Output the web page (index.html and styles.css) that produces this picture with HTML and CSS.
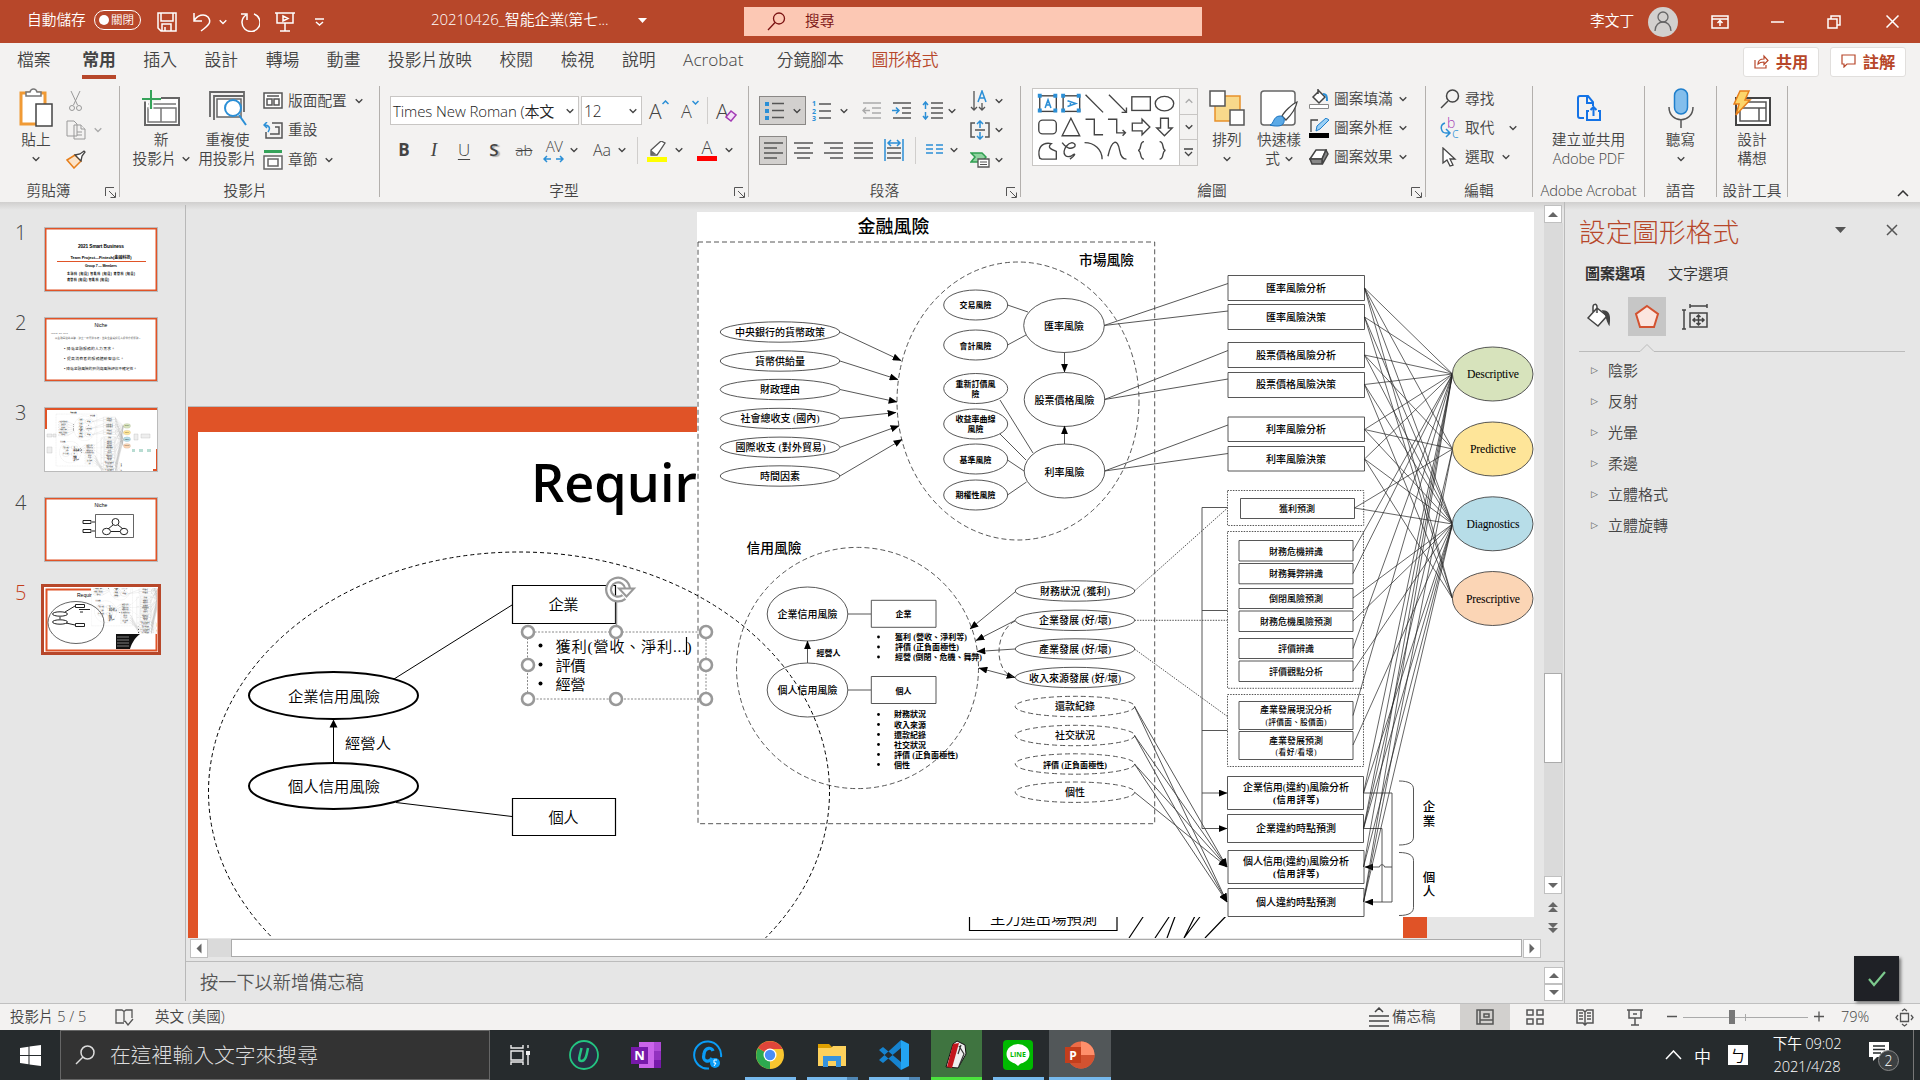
FILE: index.html
```html
<!DOCTYPE html>
<html lang="zh-Hant">
<head>
<meta charset="utf-8">
<title>20210426_智能企業 - PowerPoint</title>
<link rel="stylesheet" href="styles.css">
</head>
<body>
<svg class="defs" width="0" height="0">
  <symbol id="chev" viewBox="0 0 8 6"><path d="M.7 1.2 4 4.5 7.3 1.2" fill="none" stroke="currentColor" stroke-width="1.3"/></symbol>
  <symbol id="launch" viewBox="0 0 11 11"><path d="M.5 9V.5H9M4 4l6 6M10.5 5.5v5h-5" fill="none" stroke="#555"/></symbol>
  <marker id="arw" viewBox="0 0 10 8" refX="9.5" refY="4" markerWidth="9" markerHeight="7" orient="auto-start-reverse" markerUnits="userSpaceOnUse"><path d="M0 0 10 4 0 8z"/></marker>
</svg>
<div class="app">
<header class="titlebar">
  <span class="autosave">自動儲存</span>
  <span class="toggle"><i></i>關閉</span>
  <svg class="i-save" width="20" height="20" viewBox="0 0 20 20"><path d="M1 1h18v18H4l-3-3zM4 1v8h12V1M5 19v-7h9v7M8 15v4"/></svg>
  <svg class="i-undo" width="20" height="20" viewBox="0 0 20 20"><path d="M2 1v8h8M2 9C5 3 12 1 16 5c4 5 1 8-7 14"/></svg>
  <svg class="i-c" width="8" height="6"><use href="#chev"/></svg>
  <svg class="i-redo" width="20" height="20" viewBox="0 0 20 20"><path d="M1 2h6v6M6 3a9 9 0 1 0 8-1"/></svg>
  <svg class="i-show" width="20" height="20" viewBox="0 0 20 20"><path d="M0 1h20M2 1v10h16V1M10 11v8M5 19h10M8 4l5 2.5L8 9z"/></svg>
  <svg class="i-more" width="9" height="8" viewBox="0 0 9 8"><path d="M0 1h9M1 4l3.500 3L8 4"/></svg>
  <span class="doc">20210426_智能企業(第七...</span>
  <svg class="i-tri" width="9" height="5"><path d="M0 0h9L4.500 5z" fill="#fff" stroke="none"/></svg>
  <div class="search"><svg width="19" height="19" viewBox="0 0 19 19"><circle cx="12" cy="6.500" r="5.500"/><path d="M8 10.500 1 18"/></svg><span>搜尋</span></div>
  <span class="user">李文丁</span>
  <span class="avatar"><svg width="20" height="22" viewBox="0 0 20 22"><circle cx="10" cy="6" r="5"/><path d="M2 20c0-12 16-12 16 0"/></svg></span>
  <svg class="w1" width="18" height="14" viewBox="0 0 18 14"><path d="M1 1h16v12H1zM1 4h16M9 11V6M6.500 8 9 5.500 11.500 8"/></svg>
  <svg class="w2" width="13" height="2"><path d="M0 1h13"/></svg>
  <svg class="w3" width="14" height="14" viewBox="0 0 14 14"><path d="M1 4h9v9H1zM4 4V1h9v9h-3"/></svg>
  <svg class="w4" width="13" height="13" viewBox="0 0 13 13"><path d="m.5.5 12 12m0-12-12 12"/></svg>
</header>
<nav class="tabs">
  <span class="file">檔案</span><span class="on">常用</span><span>插入</span><span>設計</span><span>轉場</span><span>動畫</span><span>投影片放映</span><span>校閱</span><span>檢視</span><span>說明</span><span class="acro">Acrobat</span><span>分鏡腳本</span><span class="ctx">圖形格式</span>
  <div class="share">
    <button><svg width="15" height="15" viewBox="0 0 15 15"><path d="M1 6v8h11v-3M4 10c0-4 3-5 6-5V2l4 4.500-4 4V8C7 8 5.500 8.500 4 10z"/></svg>共用</button>
    <button><svg width="15" height="14" viewBox="0 0 15 14"><path d="M1 1h13v9H6l-3 3v-3H1z"/></svg>註解</button>
  </div>
</nav>
<section class="ribbon">
  <div class="group g1"><div class="body">
    <div class="big w-paste"><div class="ico"><svg width="36" height="40" viewBox="0 0 36 40"><path d="M3 5h24v31H3z" fill="#fff" stroke="#f09a35" stroke-width="3"/><path d="M8 8V4h4c1-4 6-4 7 0h4v4z" fill="#fff" stroke="#777" stroke-width="1.500"/><path d="M18 16h16v22H18z" fill="#fff" stroke="#444" stroke-width="1.500"/></svg></div><b>貼上</b><b><svg class="cv"><use href="#chev"/></svg></b></div>
    <div class="rows r1">
      <div><svg width="20" height="20" viewBox="0 0 20 20" fill="none" stroke="#999"><path d="m5 0 6.500 14M14 0 7.500 14"/><circle cx="6" cy="17" r="2.500"/><circle cx="13" cy="17" r="2.500"/></svg></div>
      <div><svg width="20" height="20" viewBox="0 0 20 20" fill="#f3f2f1" stroke="#999"><path d="M1 1h7l3 3v12H1zM8 5h7l4 4v10H8z"/><path d="M15 5v4h4M11 12h5m-5 3h5"/></svg><svg class="cv dim"><use href="#chev"/></svg></div>
      <div><svg width="20" height="19" viewBox="0 0 20 19"><path d="M1 10 9 5l6 6-7 7z" fill="#fbe3c8" stroke="#e77f1b" stroke-width="1.500"/><path d="m9 5 5-1 4-3 1 1-3 4-1 5z" fill="#fff" stroke="#444" stroke-width="1.300"/></svg></div>
    </div></div>
    <div class="label">剪貼簿<svg class="ln"><use href="#launch"/></svg></div></div>

  <div class="group g2"><div class="body">
    <div class="big w-new"><div class="ico"><svg width="38" height="36" viewBox="0 0 38 36"><path d="M3 8h34v27H3z" fill="#fff" stroke="#666" stroke-width="2"/><path d="M6 14h28M19 18v14M6 18h28v14H6z" fill="none" stroke="#777" stroke-width="1.500"/><path d="M9 0v19M0 9h19" stroke="#f3f2f1" stroke-width="5"/><path d="M9 0v19M0 9h19" stroke="#35a35a" stroke-width="2"/></svg></div><b>新</b><b>投影片 <svg class="cv"><use href="#chev"/></svg></b></div>
    <div class="big w-reuse"><div class="ico"><svg width="38" height="36" viewBox="0 0 38 36"><path d="M1 27V2h34v20M5 30V6h30" fill="none" stroke="#666" stroke-width="1.800"/><path d="M8 9h24v18H8z" fill="#fff" stroke="#666" stroke-width="1.500"/><circle cx="24" cy="18" r="8" fill="#fff" stroke="#2b8fd6" stroke-width="2"/><path d="m30 25 7 10" stroke="#2b8fd6" stroke-width="2"/></svg></div><b>重複使</b><b>用投影片</b></div>
    <div class="rows r2">
      <div><svg width="20" height="17" viewBox="0 0 20 17" fill="#fff" stroke="#555" stroke-width="1.500"><path d="M1 1h18v15H1zM4 4h12M4 7h5v6H4zM11 7h5v6h-5z"/></svg><span>版面配置</span><svg class="cv"><use href="#chev"/></svg></div>
      <div><svg width="20" height="17" viewBox="0 0 20 17" fill="none" stroke="#555" stroke-width="1.500"><path d="M9 1h10v15H3v-6M12 5h4v7H7"/><path d="M5 10C8 6 6 3 1 3m3-3L1 3l3 3" stroke="#2b8fd6"/></svg><span>重設</span></div>
      <div><svg width="20" height="20" viewBox="0 0 20 20" fill="#fff" stroke="#666" stroke-width="2"><path d="M1 1.500h18" stroke="#35a35a" stroke-width="3"/><path d="M1 6h18v13H1zM5 9h10v7H5z" stroke-width="1.500"/></svg><span>章節</span><svg class="cv"><use href="#chev"/></svg></div>
    </div></div>
    <div class="label">投影片</div></div>

  <div class="group g3"><div class="body colb">
    <div class="frow">
      <div class="sel s1"><span>Times New Roman (本文</span><svg class="cv"><use href="#chev"/></svg></div>
      <div class="sel s2"><span>12</span><svg class="cv"><use href="#chev"/></svg></div>
      <div class="fa">A<svg width="7" height="5"><path d="M.5 4 3.500 1l3 3" fill="none" stroke="#2b8fd6" stroke-width="1.500"/></svg></div>
      <div class="fa sm">A<svg width="7" height="5"><path d="M.5 1l3 3 3-3" fill="none" stroke="#2b8fd6" stroke-width="1.500"/></svg></div>
      <i class="vs"></i>
      <div class="fa er">A<svg width="12" height="13" viewBox="0 0 12 13"><path d="m1 8 5-6 5 4-5 6z" fill="#f3e0f7" stroke="#a33bb5" stroke-width="1.500"/></svg></div>
    </div>
    <div class="frow f2">
      <span class="c30"><strong>B</strong></span><span class="c30"><em>I</em></span><span class="c30 und">U</span><span class="c30"><strong class="shd">S</strong></span><span class="c30 strike">ab</span>
      <span class="c30 av">AV<svg width="21" height="8" viewBox="0 0 21 8"><path d="M1 4h7M4 1 1 4l3 3M20 4h-7m4-3 3 3-3 3" fill="none" stroke="#2b8fd6" stroke-width="1.500"/></svg></span><svg class="cv"><use href="#chev"/></svg>
      <span class="c30 aa">Aa</span><svg class="cv"><use href="#chev"/></svg><i class="vs"></i>
      <svg class="hl" width="20" height="21" viewBox="0 0 20 21"><path d="M0 16h20v5H0z" fill="#ff0"/><path d="M4 14V9L14 0l4 2-8 12z" fill="#fff" stroke="#555" stroke-width="1.300"/><path d="M4 14V9l5 4z" fill="#666"/></svg><svg class="cv"><use href="#chev"/></svg>
      <span class="fc">A</span><svg class="cv"><use href="#chev"/></svg>
    </div></div>
    <div class="label">字型<svg class="ln"><use href="#launch"/></svg></div></div>

  <div class="group g4"><div class="body">
    <div class="para">
    <div class="frow">
      <div class="press p1"><svg width="20" height="19" viewBox="0 0 20 19"><path d="M7 2.500h12M7 9.500h12M7 16.500h12" stroke="#555" stroke-width="1.500"/><path d="M0 1h4v4H0zM0 8h4v4H0zM0 15h4v4H0z" fill="#2b8fd6"/></svg><svg class="cv"><use href="#chev"/></svg></div>
      <svg class="num" width="20" height="22" viewBox="0 0 20 22"><path d="M7 4h12M7 11h12M7 18h12" stroke="#555" stroke-width="1.500"/><g fill="#2b8fd6" font-size="7" font-weight="700"><text x="0" y="6">1</text><text x="0" y="14">2</text><text x="0" y="21">3</text></g></svg><svg class="cv"><use href="#chev"/></svg>
      <svg class="ded" width="19" height="17" viewBox="0 0 19 17" stroke="#aaa" fill="none" stroke-width="1.500"><path d="M1 1h18M10 6h9M10 11h9M1 16h18M8 8.500H1m3-3-3 3 3 3"/></svg>
      <svg class="ind" width="19" height="17" viewBox="0 0 19 17" stroke="#555" fill="none" stroke-width="1.500"><path d="M1 1h18M10 6h9M10 11h9M1 16h18"/><path d="M0 8.500h7m-3-3 3 3-3 3" stroke="#2b8fd6"/></svg>
      <svg class="lsp" width="21" height="19" viewBox="0 0 21 19" stroke="#555" fill="none" stroke-width="1.500"><path d="M9 2h12M9 7h12M9 12h12M9 17h12"/><path d="M3.500 1v7M1 4l2.500-3L6 4M3.500 11v7M1 15l2.500 3L6 15" stroke="#2b8fd6"/></svg><svg class="cv"><use href="#chev"/></svg>
    </div>
    <div class="frow f2">
      <div class="press p2"><svg width="19" height="18" class="al"><path d="M0 2h19M0 7h13M0 12h19M0 17h13"/></svg></div>
      <svg width="19" height="18" class="al a2"><path d="M0 2h19M3 7h13M0 12h19M3 17h13"/></svg>
      <svg width="19" height="18" class="al a3"><path d="M0 2h19M6 7h13M0 12h19M6 17h13"/></svg>
      <svg width="19" height="18" class="al a3"><path d="M0 2h19M0 7h19M0 12h19M0 17h19"/></svg>
      <svg width="20" height="22" class="al a3"><path d="M3 9h14M3 14h14M3 19h14"/><path d="M1 0v22M19 0v22M4 4h12M7 1 4 4l3 3M13 1l3 3-3 3" stroke="#2b8fd6"/></svg>
      <i class="vs"></i>
      <svg width="17" height="12" class="cols"><path d="M0 1h7M0 5h7M0 9h7M10 1h7M10 5h7M10 9h7" stroke="#2b8fd6" stroke-width="1.700"/></svg><svg class="cv"><use href="#chev"/></svg>
    </div></div>
    <div class="rows r4">
      <div><svg width="20" height="22" viewBox="0 0 20 22" fill="none" stroke="#555" stroke-width="1.300"><path d="M4 1v19M1 17l3 3 3-3M12 13v7M9 17l3 3 3-3"/><path d="M8 12 12 1l4 11M9.500 8h5" stroke="#2b8fd6" stroke-width="1.500"/></svg><svg class="cv"><use href="#chev"/></svg></div>
      <div><svg width="20" height="20" viewBox="0 0 20 20" fill="none" stroke="#555" stroke-width="1.500"><path d="M5 3H1v14h4M15 3h4v14h-4M5 10h10"/><path d="M10 1v7M7 4l3-3 3 3M10 12v7M7 16l3 3 3-3" stroke="#2b8fd6"/></svg><svg class="cv"><use href="#chev"/></svg></div>
      <div><svg width="20" height="16" viewBox="0 0 20 16"><path d="M1 1h11l4 4-4 5H1l4-5z" fill="#8fd39f" stroke="#2f9e50" stroke-width="1.500"/><path d="M8 7h11v8H8z" fill="#fff" stroke="#555" stroke-width="1.300"/><path d="M10 10h7M10 12.500h7" stroke="#555"/></svg><svg class="cv"><use href="#chev"/></svg></div>
    </div></div>
    <div class="label">段落<svg class="ln"><use href="#launch"/></svg></div></div>

  <div class="group g5"><div class="body">
    <div class="gallery">
      <svg width="146" height="78" viewBox="1032 88 146 78" fill="none" stroke="#444" stroke-width="1.400">
        <rect x="1037" y="95" width="17" height="16"/><rect x="1061" y="95" width="17" height="16"/>
        <g fill="#2b8fd6" stroke="none"><path d="M1035 93h4v4h-4zM1051 93h4v4h-4zM1035 108h4v4h-4zM1051 108h4v4h-4zM1059 93h4v4h-4zM1075 93h4v4h-4zM1059 108h4v4h-4zM1075 108h4v4h-4z"/></g>
        <path d="m1042.500 107.500 3-8.500 3 8.500m-5-3h4M1065.500 100l8.500 3-8.500 3m3-5v4" stroke="#2b8fd6" stroke-width="1.600"/>
        <path d="m1084 94 18 18M1108 94l18 18M1126 107v5h-5"/><rect x="1131.500" y="96" width="19" height="14"/><ellipse cx="1165" cy="103" rx="9.500" ry="7.500"/>
        <rect x="1036" y="120" width="18" height="14" rx="4"/><path d="m1069 118 9 18h-18zM1084 119h9v16h9M1107 119h9v14h9m-3-3 3 3-3 3M1132 123h10v-4l8 8-8 8v-4h-10zM1161 118h8v10h4l-8 8-8-8h4z"/>
        <path d="M1037 159c-3-10 2-17 12-15-5 4 0 6 5 8v8h-15zM1060 143c8 12 19 2 10 0-9 2-12 17-1 14 7-5 3 0-1 3M1083 143c10 0 18 7 18 17M1107 157c4-18 10-18 12-6 1 6 3 9 7 9M1144 142c-5 0-2 8-6 9 4 1 1 9 6 9M1160 142c5 0 2 8 6 9-4 1-1 9-6 9"/>
      </svg>
      <div class="gbtn"><i><svg class="cv dim up"><use href="#chev"/></svg></i><i><svg class="cv"><use href="#chev"/></svg></i><i class="l3"><svg width="9" height="9" viewBox="0 0 9 9"><path d="M0 1h9M1 4l3.500 3.500L8 4" fill="none" stroke="#444" stroke-width="1.300"/></svg></i></div>
    </div>
    <div class="big w-arr"><div class="ico"><svg width="36" height="36" viewBox="0 0 36 36" stroke-width="1.500"><path d="M6 6h25v25H6z" fill="#f8d98b" stroke="#e8912b"/><path d="M1 1h15v15H1zM21 20h14v15H21z" fill="#fff" stroke="#555"/></svg></div><b>排列</b><b><svg class="cv"><use href="#chev"/></svg></b></div>
    <div class="big w-qs"><div class="ico"><svg width="38" height="37" viewBox="0 0 38 37"><rect x="1" y="1" width="34" height="34" rx="3" fill="#fff" stroke="#666" stroke-width="1.500"/><path d="M37 12c-5 2-13 10-15 14l4 4c4-4 10-12 11-18z" fill="#fff" stroke="#444" stroke-width="1.300"/><path d="M10 35c4-1 3-9 10-9 6 0 6 10-2 10-3 0-5 0-8-1z" fill="#5aa9e6" stroke="#1a73c0"/></svg></div><b>快速樣</b><b>式 <svg class="cv"><use href="#chev"/></svg></b></div>
    <div class="rows r5">
      <div><svg width="20" height="20" viewBox="0 0 20 20"><path d="M4 8 10 2l6 6-6 6zM9 0v5" fill="#fff" stroke="#444" stroke-width="1.500"/><path d="M14 5c4 0 4 3 4 7" fill="none" stroke="#2b8fd6" stroke-width="2"/><path d="M.5 15.500h19v4H.5z" fill="#fff" stroke="#888"/></svg><span>圖案填滿</span><svg class="cv"><use href="#chev"/></svg></div>
      <div><svg width="20" height="20" viewBox="0 0 20 20"><path d="M9 2H2v12" fill="none" stroke="#444" stroke-width="1.300"/><path d="m7 13 1-5 9-8 3 2-9 9z" fill="#9bd0f5" stroke="#1f7fcc"/><path d="M0 15h20v5H0z"/></svg><span>圖案外框</span><svg class="cv"><use href="#chev"/></svg></div>
      <div><svg width="20" height="16" viewBox="0 0 20 16" stroke="#444" stroke-width="1.500"><path d="M1 10 7 1h10L13 10z" fill="#fff"/><path d="M17 1l2 4-5 9-1-4zM1 10h12v5H3z" fill="#888"/></svg><span>圖案效果</span><svg class="cv"><use href="#chev"/></svg></div>
    </div></div>
    <div class="label">繪圖<svg class="ln"><use href="#launch"/></svg></div></div>

  <div class="group g6"><div class="body"><div class="rows r6">
      <div><svg width="20" height="20" viewBox="0 0 20 20" fill="none" stroke="#444" stroke-width="1.500"><circle cx="12.500" cy="7" r="6"/><path d="m8 12-7 7"/></svg><span>尋找</span></div>
      <div><svg width="20" height="22" viewBox="0 0 20 22"><g font-size="14"><text x="7" y="10.500" fill="#a33bb5">b</text><text x="12" y="21" fill="#2b8fd6">c</text></g><path d="M5 6c-6 2-4 10 1 10h3m-3-4 4 4-4 4" fill="none" stroke="#2b8fd6" stroke-width="1.500"/></svg><span>取代</span><svg class="cv far"><use href="#chev"/></svg></div>
      <div><svg width="20" height="20" viewBox="0 0 20 20"><path d="M3 1v15l4-3 3 6 3-1-3-6h5z" fill="#fff" stroke="#444" stroke-width="1.300"/></svg><span>選取</span><svg class="cv"><use href="#chev"/></svg></div>
    </div></div><div class="label">編輯</div></div>
  <div class="group g7"><div class="body"><div class="big"><div class="ico"><svg width="24" height="26" viewBox="0 0 24 26" fill="none" stroke="#1473e6" stroke-width="2"><path d="M7 23H3a2 2 0 0 1-2-2V3a2 2 0 0 1 2-2h8l5 6v4M10 1v7h6M12 16h-2v9h13v-9h-2M16.500 21v-9m-3 3 3-3 3 3"/></svg></div><b>建立並共用</b><b class="ls">Adobe PDF</b></div></div><div class="label ls">Adobe Acrobat</div></div>
  <div class="group g8"><div class="body"><div class="big"><div class="ico"><svg width="26" height="40" viewBox="0 0 26 40"><rect x="6.500" y="1" width="13" height="25" rx="6.500" fill="#83beec" stroke="#1f7fcc" stroke-width="1.500"/><path d="M1 19c0 17 24 17 24 0M13 32v8" fill="none" stroke="#555" stroke-width="1.500"/></svg></div><b>聽寫</b><b><svg class="cv"><use href="#chev"/></svg></b></div></div><div class="label">語音</div></div>
  <div class="group g9"><div class="body"><div class="big"><div class="ico"><svg width="38" height="36" viewBox="0 0 38 36"><path d="M3 8h34v27H3z" fill="#fff" stroke="#444" stroke-width="2"/><path d="M7 12h26v19H7zM7 18h26M26 18v13" fill="none" stroke="#555" stroke-width="1.500"/><path d="M7 1h9l-4 9h5L3 25l3-11H1z" fill="#fcd56a" stroke="#e77f1b" stroke-width="1.500"/></svg></div><b>設計</b><b>構想</b></div></div><div class="label">設計工具</div></div>
  <svg class="collapse" width="12" height="7" viewBox="0 0 12 7"><path d="m1 6 5-5 5 5" fill="none" stroke="#333" stroke-width="1.500"/></svg>
</section>

<main class="work">
<aside class="thumbs">
  <div class="trow"><span>1</span><svg class="th" width="114" height="65" viewBox="44 227 114 65"><rect x="45.500" y="228.500" width="111" height="62" fill="#fff" stroke="#e05327" stroke-width="2"/><path d="M57 261.500h89" stroke="#e05327"/><g text-anchor="middle" font-weight="700"><text x="101" y="247.500" font-size="4.800" textLength="46">2021 Smart Business</text><text x="101" y="258.500" font-size="4" textLength="61">Team Project—Fintech(金融科技)</text><text x="101" y="267" font-size="3.500" textLength="32">Group 7 — Members</text><text x="101" y="275" font-size="3" textLength="68">金融科 (組員) 智能科 (組員) 資管科 (組員)</text><text x="88" y="280.500" font-size="3" textLength="42">資管科 (組員) 智能科 (組員)</text></g></svg></div>
  <div class="trow"><span>2</span><svg class="th" width="114" height="65" viewBox="44 317 114 65"><rect x="45.500" y="318.500" width="111" height="62" fill="#fff" stroke="#e05327" stroke-width="2"/><text x="101" y="327" text-anchor="middle" font-size="5">Niche</text><g font-size="2.500" fill="#555"><text x="51" y="333.500" textLength="17">What we do?</text><text x="55" y="338.500" textLength="86">以金融風險為基礎，建立一套預測系統，並為企業與投資人提供分析服務。</text></g><g font-size="3.800"><text x="64" y="350" textLength="51">• 降低金融服務的人力需求。</text><text x="64" y="359.500" textLength="60">• 提高消費者的服務體驗智慧化。</text><text x="64" y="370" textLength="73">• 降低金融風險的預測與風險評估不確定性。</text></g></svg></div>
  <div class="trow"><span>3</span><svg class="th" width="114" height="65" viewBox="44 407 114 65"><rect x="45" y="408" width="112" height="63" fill="#fff"/><path d="M45 429v-21h112v2H47v19zM153 469h3v-20h1v22h-4z" fill="#e05327"/><use href="#pic" transform="translate(-6.300 392.500) scale(.0893)"/><g fill="#eee" stroke="#aaa" stroke-width=".3"><path d="M47 434h5v3h-5zM53 434h3v3h-3zM47 447h5v6h-5zM134 434h4v6h-4zM141 434h9v4h-9z"/></g><path d="M132 449h3v3h-3zM139 449h4v3h-4zM147 449h4v3h-4z" fill="#b8dcd2"/></svg></div>
  <div class="trow"><span>4</span><svg class="th" width="114" height="65" viewBox="44 497 114 65"><rect x="45.500" y="498.500" width="111" height="62" fill="#fff" stroke="#e05327" stroke-width="2"/><text x="101" y="507" text-anchor="middle" font-size="5">Niche</text><g fill="none" stroke="#222"><path d="M95.500 514.500h38v23h-38z" stroke-width=".7"/><path d="M83 520.500h8v3h-8zM83 529.500h8v3h-8zM92 522h3M92 531h3M108 529l5-4M118 525l5 4M111 531.500h9"/><circle cx="115.500" cy="522" r="3.500"/><ellipse cx="106.500" cy="531.500" rx="4" ry="3.200"/><ellipse cx="124" cy="531.500" rx="3.700" ry="3.200"/></g></svg></div>
  <div class="trow cur"><span>5</span><svg class="th5" width="120" height="71" viewBox="41 584 120 71"><rect x="42.500" y="585.500" width="117" height="68" fill="#fff" stroke="#b7472a" stroke-width="3"/><rect x="46.500" y="589.500" width="110" height="61" fill="#fff" stroke="#e05327" stroke-width="2"/><rect x="91" y="588" width="66" height="46" fill="#fff"/><svg x="91" y="588" width="66" height="46" viewBox="697 406 728 508" preserveAspectRatio="none"><use href="#pic"/></svg><text x="77" y="597" font-size="5">Requir</text><g fill="none" stroke="#222"><ellipse cx="76" cy="622.500" rx="28" ry="21" stroke-width=".7"/><ellipse cx="60" cy="614" rx="7.500" ry="2.200"/><ellipse cx="60" cy="622" rx="7.500" ry="2.200"/><path d="M75.500 604.500h9v3h-9zM75.500 623.500h9v3h-9zM65 612l10-6M66 623l9 2M60 617v2M79 609.500h11M80 612h3"/></g><path d="M116 634h24c-6 5-8 9-10 15h-14z" fill="#111"/><path d="M117 637h12M117 640h12M117 643h12M117 646h12" stroke="#eee" stroke-width=".5"/></svg></div>
</aside>

<section class="editor">
<div class="stage">
<svg class="slide" width="1358" height="735" viewBox="186 203 1358 735">
  <path d="M188 406h1239v540H188z" fill="#e05327"/><path d="M188 406.500h1239" stroke="#bbb"/>
  <path d="M198 432h1205v520H198z" fill="#fff"/>
  <g fill="none" stroke="#000" stroke-width="1.200"><path d="M969.500 900v30.500h147.500V900" /><path d="m1145 914-16 24M1171 914l-16 24M1176 914l-9 24M1196 914l-12 24M1202 914l-18 24M1228 914l-23 24"/></g>
  <text class="kai" x="990" y="923.500" textLength="107">主力進出場預測</text>
  <text class="req" x="531" y="502" textLength="166" lengthAdjust="spacingAndGlyphs">Requir</text>
  <g id="pic">
    <path d="M697 212h837v705H697z" fill="#fff"/>
    <g class="ln1">
      <path d="M698 242h456.700v581.700H698z" class="dash"/>
      <ellipse cx="1018" cy="401" rx="121" ry="139" class="dash"/><ellipse cx="857.500" cy="668" rx="121" ry="120.600" class="dash"/>
      <ellipse cx="780" cy="332" rx="59.800" ry="10.200"/><ellipse cx="780" cy="361" rx="59.800" ry="10.200"/><ellipse cx="780" cy="389.500" rx="59.800" ry="10.200"/><ellipse cx="780" cy="418.500" rx="59.800" ry="10.200"/><ellipse cx="780" cy="447.300" rx="59.800" ry="10.200"/><ellipse cx="780" cy="476" rx="59.800" ry="10.200"/>
      <ellipse cx="975.700" cy="305" rx="32" ry="15"/><ellipse cx="975.700" cy="345" rx="32" ry="15"/><ellipse cx="975.700" cy="388.500" rx="32" ry="15"/><ellipse cx="975.700" cy="424" rx="32" ry="15"/><ellipse cx="975.700" cy="459" rx="32" ry="15"/><ellipse cx="975.700" cy="495" rx="32" ry="15"/>
      <ellipse cx="1064" cy="325.500" rx="40.300" ry="27"/><ellipse cx="1064.500" cy="399.500" rx="40.300" ry="27"/><ellipse cx="1064.500" cy="471" rx="40.300" ry="27"/>
      <ellipse cx="807.500" cy="614" rx="40.300" ry="27"/><ellipse cx="807.500" cy="690" rx="40.300" ry="27"/>
      <path d="M871.300 600.300H936v27h-64.700zM871.300 676.500H936v27h-64.700zM848 614h23M848 690h23"/>
      <ellipse cx="1075" cy="591" rx="59.800" ry="10.200"/><ellipse cx="1075" cy="620.300" rx="59.800" ry="10.200"/><ellipse cx="1075" cy="649" rx="59.800" ry="10.200"/><ellipse cx="1075" cy="677.500" rx="59.800" ry="10.200"/>
      <g class="dash"><ellipse cx="1075" cy="706.500" rx="59.800" ry="10.200"/><ellipse cx="1075" cy="735.500" rx="59.800" ry="10.200"/><ellipse cx="1075" cy="764" rx="59.800" ry="10.200"/><ellipse cx="1075" cy="792.200" rx="59.800" ry="10.200"/></g>
      <path d="M1007.500 305l20.500 7M1007.500 345l18.500-10M1000 400l33 53M1000 434l26 26M1007.500 460l16.500 11M1007.500 495l19-13M1104 325.500l124-42M1104 325.500l124-14.500M1104.500 399.500l123.500-49M1104.500 399.500l123.500-20.500M1104.500 471l123.500-46M1104.500 471l123.500-17.500"/>
      <g marker-end="url(#arw)"><path d="m840 332 61 28.500"/><path d="m840 361 58 18.500"/><path d="m840 389.500 57 12.500"/><path d="m840 418.500 56-6"/><path d="m840 447.300 59-21.500"/><path d="m840 476 62-36.500"/><path d="M1064.500 353v19"/><path d="M1064.500 444v-18"/><path d="M807.500 663v-22"/><path d="m1015 592-45 37"/><path d="m1015 620.500-39 20"/><path d="m1015 649-38 2.500"/><path d="M1202 793h25"/><path d="M1202 828.500h25"/><path d="M1134.500 706.500 1227 867"/><path d="M1134.500 706.500 1227 902"/><path d="M1134.500 735.500 1227 867"/><path d="M1134.500 735.500 1227 902"/><path d="M1134.500 764 1227 867"/><path d="M1134.500 764 1227 902"/><path d="M1134.500 792.200 1227 867"/><path d="M1363.500 793H1392v109h-27"/><path d="M1392 867h-7.500c0-3-5-3-5 0H1365"/></g>
      <path d="m1015 677.500-36-9.500" marker-start="url(#arw)" marker-end="url(#arw)"/><path d="M1015 621c-21 11-21 50-2 56" class="dash"/>
      <path d="M1202 828.500v-321h25.500M1202 610.500h25.500M1202 730.500h25.500M1363.500 828.500h18.500V902"/>
      <path d="m1134.500 591 93-83M1134.500 620.300h93M1134.500 649l93 67.500M1227.500 490.500h136.200v35h-136.200zM1227.500 531.500h136v156.800h-136zM1227.500 694.500h136v72h-136z" class="dot"/>
      <path d="M1228 275.500h136.500v25H1228zM1228 304.500h136.500v25H1228zM1228 342.500h136.500v25H1228zM1228 372.500h136.500v25H1228zM1228 417h136.500v24.500H1228zM1228 446.500h136.500v24.500H1228zM1240.500 498.500h114v20h-114zM1239 540.500h114V561h-114zM1239 563.500h114v20.300h-114zM1239 588.500h114v20h-114zM1239 611h114v20.500h-114zM1239 638.500h114v20h-114zM1239 661h114v20.500h-114zM1239 701.500h114v28h-114zM1239 731.500h114v28h-114zM1227.500 776.500h136v33h-136zM1227.500 814.500h136v28h-136zM1228 850.500h136v33h-136zM1228 888.500h136v28h-136z"/>
      <path class="fan" d="M1452.500 374 1364.500 288M1452.500 374 1364.500 317M1452.500 374 1364.500 355M1452.500 374 1364.500 384.500M1452.500 374 1364.500 429.500M1452.500 374 1364.500 459M1452.500 374 1353 551M1452.500 374 1353 573.500M1452.500 374 1353 648.500M1452.500 374 1353 715.500M1452.500 374 1363.500 793M1452.500 374 1363.500 867M1452.500 449 1364.500 288M1452.500 449 1364.500 355M1452.500 449 1364.500 429.500M1452.500 449 1354.500 508M1452.500 449 1363.500 828.500M1452.500 449 1363.500 902M1452.500 524 1364.500 288M1452.500 524 1364.500 317M1452.500 524 1364.500 355M1452.500 524 1364.500 384.500M1452.500 524 1364.500 429.500M1452.500 524 1364.500 459M1452.500 524 1354.500 508M1452.500 524 1353 598M1452.500 524 1353 621M1452.500 524 1353 671M1452.500 524 1353 745M1452.500 524 1363.500 793M1452.500 524 1363.500 828.500M1452.500 524 1363.500 867M1452.500 524 1363.500 902M1452.500 598.500 1364.500 317M1452.500 598.500 1364.500 384.500M1452.500 598.500 1364.500 459M1452.500 374 1363.500 828.500M1452.500 374 1363.500 902M1452.500 598.500 1364.500 288"/>
      <path d="M1399 781c10 0 14.500 3 14.500 8v48c0 5-4.500 8-14.500 8M1399 852.500c10 0 14.500 3 14.500 8v47c0 5-4.500 8-14.500 8"/>
      <ellipse cx="1492.700" cy="374" rx="40.300" ry="27" fill="#d7e3bc"/><ellipse cx="1492.700" cy="449" rx="40.300" ry="27" fill="#fee599"/><ellipse cx="1492.700" cy="523.800" rx="40.300" ry="27" fill="#b7dde8"/><ellipse cx="1492.700" cy="598.500" rx="40.300" ry="27" fill="#fbd5b5"/>
    </g>
    <g class="ser" text-anchor="middle">
      <g class="s18"><text x="893.500" y="232.500" textLength="72">金融風險</text></g><g class="s14"><text x="1106.500" y="265" textLength="55">市場風險</text><text x="774" y="553" textLength="55">信用風險</text></g>
      <text x="780" y="335.500">中央銀行的貨幣政策</text><text x="780" y="364.500">貨幣供給量</text><text x="780" y="393">財政理由</text><text x="780" y="422" textLength="79">社會總收支 (國內)</text><text x="780.500" y="451" textLength="90">國際收支 (對外貿易)</text><text x="780" y="479.500">時間因素</text>
      <text x="1064" y="330">匯率風險</text><text x="1064.500" y="403.500">股票價格風險</text><text x="1064.500" y="475.500">利率風險</text><text x="807.500" y="617.500">企業信用風險</text><text x="807.500" y="694">個人信用風險</text>
      <text x="1075" y="595" textLength="70">財務狀況 (獲利)</text><text x="1075" y="624" textLength="72">企業發展 (好/壞)</text><text x="1075" y="653" textLength="72">產業發展 (好/壞)</text><text x="1075" y="681.500" textLength="92">收入來源發展 (好/壞)</text><text x="1075" y="710">還款紀錄</text><text x="1075" y="739">社交狀況</text><text x="1075" y="796">個性</text>
      <text x="1296" y="291.500">匯率風險分析</text><text x="1296" y="320.500">匯率風險決策</text><text x="1296" y="358.500">股票價格風險分析</text><text x="1296" y="388">股票價格風險決策</text><text x="1296" y="433">利率風險分析</text><text x="1296" y="462.500">利率風險決策</text>
      <text x="1296" y="790.500" textLength="106">企業信用(違約)風險分析</text><text x="1296" y="802.500" class="b9" textLength="46">(信用評等)</text><text x="1296" y="832">企業違約時點預測</text><text x="1296" y="864.500" textLength="106">個人信用(違約)風險分析</text><text x="1296" y="876.500" class="b9" textLength="46">(信用評等)</text><text x="1296" y="905.500">個人違約時點預測</text>
      <g class="b8"><text x="975.500" y="308">交易風險</text><text x="975.500" y="348.500">會計風險</text><text x="975.500" y="387">重新訂價風</text><text x="975.500" y="396.500">險</text><text x="975.500" y="422">收益率曲線</text><text x="975.500" y="431.500">風險</text><text x="975.500" y="462.500">基準風險</text><text x="975.500" y="498">期權性風險</text><text x="903.500" y="617">企業</text><text x="903.500" y="693.500">個人</text><text x="828.500" y="656">經營人</text><text x="1075" y="767.500" textLength="64">評價 (正負面極性)</text></g>
      <g class="s9"><text x="1297" y="511.500">獲利預測</text><text x="1296" y="554.500">財務危機辨識</text><text x="1296" y="576.500">財務舞弊辨識</text><text x="1296" y="601.500">倒閉風險預測</text><text x="1296" y="624.500">財務危機風險預測</text><text x="1296" y="651.500">評價辨識</text><text x="1296" y="674.500">評價觀點分析</text><text x="1296" y="712.500">產業發展現況分析</text><text x="1296" y="743.500">產業發展預測</text></g>
      <g class="s7"><text x="1296" y="724.500" textLength="61">(評價面、股價面)</text><text x="1296" y="755" textLength="41">(看好/看壞)</text></g>
      <g class="s12"><text x="1429" y="811">企</text><text x="1429" y="825.500">業</text><text x="1429" y="881.500">個</text><text x="1429" y="896">人</text></g>
      <g class="en"><text x="1493" y="378" textLength="52">Descriptive</text><text x="1493" y="453" textLength="46">Predictive</text><text x="1493" y="528" textLength="53">Diagnostics</text><text x="1493" y="602.500" textLength="54">Prescriptive</text></g>
    </g>
    <g class="ser b8"><text x="895" y="640" textLength="72">獲利 (營收、淨利等)</text><text x="895" y="650" textLength="64">評價 (正負面極性)</text><text x="895" y="660" textLength="87">經營 (倒閉、危機、舞弊)</text><text x="894" y="717">財務狀況</text><text x="894" y="727.500">收入來源</text><text x="894" y="737.500">還款紀錄</text><text x="894" y="747.500">社交狀況</text><text x="894" y="757.500" textLength="64">評價 (正負面極性)</text><text x="894" y="767.500">個性</text></g>
    <g><circle cx="878.500" cy="637" r="1.400"/><circle cx="878.500" cy="647" r="1.400"/><circle cx="878.500" cy="657" r="1.400"/><circle cx="878.500" cy="714.500" r="1.400"/><circle cx="878.500" cy="724.500" r="1.400"/><circle cx="878.500" cy="734.500" r="1.400"/><circle cx="878.500" cy="744.500" r="1.400"/><circle cx="878.500" cy="754.500" r="1.400"/><circle cx="878.500" cy="764.500" r="1.400"/></g>
  </g>
  <g fill="none" stroke="#000"><ellipse cx="519" cy="792" rx="310.500" ry="240" stroke-dasharray="4 3"/>
    <path d="M512.500 585.500h103v38h-103zM512.500 798.500h103v37h-103z" stroke-width="1.200"/><ellipse cx="333.500" cy="695.500" rx="84.500" ry="23.500" stroke-width="2"/><ellipse cx="333.500" cy="786" rx="84.500" ry="23" stroke-width="2"/><path d="m394 679 118-74M396 802.500l116 14M333.500 763v-36"/></g>
  <path d="m333.500 719.500 4 8h-8z"/>
  <g class="kai"><text x="288" y="701.500" textLength="92">企業信用風險</text><text x="288" y="791.500" textLength="92">個人信用風險</text><text x="345" y="749" textLength="46">經營人</text><text x="548.500" y="610" textLength="30">企業</text><text x="548.500" y="822.500" textLength="30">個人</text><text x="555.500" y="652" textLength="136">獲利(營收、淨利...)</text><text x="555.500" y="671" textLength="30">評價</text><text x="555.500" y="690" textLength="30">經營</text></g>
  <circle cx="540.500" cy="645.500" r="2"/><circle cx="540.500" cy="664.500" r="2"/><circle cx="540.500" cy="683.500" r="2"/><path d="M686.500 637v18" stroke="#000" stroke-width="1.200"/>
  <path d="M527.500 632h178.500v67H527.500z" fill="none" stroke="#888" stroke-dasharray="2 1.500"/><path d="M616.500 600v26" stroke="#999" stroke-width="1.500"/>
  <g fill="#fff" stroke="#999" stroke-width="2.600"><circle cx="528" cy="632" r="6"/><circle cx="616" cy="632" r="6"/><circle cx="706" cy="632" r="6"/><circle cx="528" cy="665" r="6"/><circle cx="706" cy="665" r="6"/><circle cx="528" cy="699" r="6"/><circle cx="616" cy="699" r="6"/><circle cx="706" cy="699" r="6"/></g>
  <g fill="none"><path d="M624 597a9.500 9.500 0 1 1 3.500-8.500" stroke="#999" stroke-width="7"/><path d="M624 597a9.500 9.500 0 1 1 3.500-8.500" stroke="#fff" stroke-width="2.500"/><path d="M619 588.500h15l-7.500 8z" fill="#fff" stroke="#999" stroke-width="2"/></g>
</svg>
<div class="vscroll"><i class="b"><s class="up"></s></i><i class="track"><i class="thumb"></i></i><i class="b"><s></s></i><svg width="14" height="40" viewBox="0 0 14 40" fill="#666"><path d="m7 4 5 5H2zM7 9l5 5H2zM7 35l5-5H2zM7 30l5-5H2z"/></svg></div>
</div>
<div class="hscroll"><i class="b"><s class="lf"></s></i><i class="gap"></i><i class="bar"></i><i class="b r"><s class="rt"></s></i></div>
<div class="notes"><span>按一下以新增備忘稿</span><div><i class="b"><s class="up"></s></i><i class="b"><s></s></i></div></div>
</section>

<aside class="pane">
  <div class="ptitle"><span>設定圖形格式</span><svg width="11" height="6"><path d="M0 0h11L5.500 6z" fill="#555"/></svg><svg width="12" height="12"><path d="m1 1 10 10m0-10L1 11" stroke="#555" stroke-width="1.500"/></svg></div>
  <div class="ptabs"><b>圖案選項</b><span>文字選項</span></div>
  <div class="picons">
    <span><svg width="28" height="28" viewBox="0 0 28 28" fill="#fff" stroke="#444" stroke-width="1.500"><path d="m3 15 9-10 10 8-9 10zM12 10V4c0-4-4-3-4 0v5"/><path d="M18 8c6 0 7 5 6 13-3-5-2-8-4-10z" fill="#444"/></svg></span>
    <span class="sel2"><svg width="26" height="26" viewBox="0 0 26 26"><path d="M13 2 24 10l-4 13H6L2 10z" fill="#fbe5df" stroke="#d35230" stroke-width="2"/></svg></span>
    <span><svg width="28" height="28" viewBox="0 0 28 28" fill="none" stroke="#444" stroke-width="1.500"><path d="M9 10h17v14H9zM3 7v19M1 7h4M1 26h4M9 3h17M9 1v4M26 1v4M17.500 12v10M12 17h11M15.500 14l2-2 2 2M15.500 20l2 2 2-2M14 15l-2 2 2 2M21 15l2 2-2 2"/></svg></span>
  </div>
  <svg class="notch" width="326" height="9" viewBox="0 0 326 9"><path d="M0 8.500h61l7-7 7 7h251" fill="none" stroke="#bbb"/></svg>
  <ul><li>陰影</li><li>反射</li><li>光暈</li><li>柔邊</li><li>立體格式</li><li>立體旋轉</li></ul>
</aside>
</main>
<div class="check"><svg width="18" height="16" viewBox="0 0 18 16"><path d="m1 8 5 6L17 1" fill="none" stroke="#7cc98d" stroke-width="2.200"/></svg></div>

<footer class="status">
  <span class="st1">投影片 5 / 5</span>
  <svg width="19" height="17" viewBox="0 0 19 17" fill="none" stroke="#555" stroke-width="1.300"><path d="M9 14H1V1h6l2 1.500L11 1h6v8M9 2v11M10 12l3 4 5-6"/></svg>
  <span class="st2">英文 (美國)</span>
  <div class="right">
    <svg width="20" height="20" viewBox="0 0 20 20" stroke="#444" stroke-width="1.500" fill="none"><path d="m6 5 4-4 4 4M0 9h20M0 14h20M0 19h20"/></svg><span class="st3">備忘稿</span>
    <span class="vb on"><svg width="18" height="16" viewBox="0 0 18 16"><path d="M1 1h16v14H1zM4 1v14M4 11h13M8 5h5v3H8z"/></svg></span>
    <span class="vb"><svg width="18" height="16" viewBox="0 0 18 16"><path d="M1 1h6v5H1zM11 1h6v5h-6zM1 10h6v5H1zM11 10h6v5h-6z"/></svg></span>
    <span class="vb"><svg width="18" height="17" viewBox="0 0 18 17"><path d="M9 3 7 1H1v13h6l2 2 2-2h6V1h-6zv13M3 4h4M3 7h4M3 10h4M11 4h4M11 7h4M11 10h4"/></svg></span>
    <span class="vb"><svg width="16" height="17" viewBox="0 0 16 17"><path d="M0 1h16M2 1v8h12V1M8 9v7M4 16h8M6 5h4"/></svg></span>
    <svg class="zoomer" width="157" height="16" viewBox="1667 1009 157 16" stroke="#555" fill="none"><path d="M1667 1016.500h10M1814 1016.500h10M1819 1011.500v10" stroke-width="1.300"/><path d="M1683 1017.500h125M1745.500 1014v7" stroke="#aaa"/><path d="M1729 1010h6v14h-6z" fill="#777" stroke="none"/></svg>
    <span class="pct">79%</span>
    <svg width="19" height="19" viewBox="0 0 19 19" stroke="#555" stroke-width="1.300" fill="none"><path d="M5.500 5.500h8v8h-8zM7 3l2.500-2L12 3M7 16l2.500 2 2.500-2M3 7 1 9.500 3 12M16 7l2 2.500-2 2.500"/></svg>
  </div>
</footer>

<div class="taskbar">
  <span class="start"><svg width="21" height="21" viewBox="0 0 21 21" fill="#fff"><path d="M0 3l8.500-1.200V10H0zM9.500 1.600 21 0v10H9.500zM0 11h8.500v8.200L0 18zM9.500 11H21v10L9.500 19.400z"/></svg></span>
  <div class="tsearch"><svg width="20" height="20" viewBox="0 0 20 20" fill="none" stroke="#ddd" stroke-width="1.500"><circle cx="12.500" cy="7.500" r="6.500"/><path d="M8 12 1 19"/></svg><span>在這裡輸入文字來搜尋</span></div>
  <span class="tv"><svg width="20" height="20" viewBox="0 0 20 20" fill="none" stroke="#eee" stroke-width="1.400"><path d="M1 0v3h12V0M1 6h12v9H1zM1 20v-3h12v3M18 0v3M18 10v10"/><path d="M16 6h4v4h-4z" fill="#eee" stroke="none"/></svg></span>
  <span class="t"><svg width="30" height="30" viewBox="0 0 30 30" fill="none"><circle cx="15" cy="15" r="14" fill="#272c42" stroke="#24c481" stroke-width="1.800"/><path d="M12.500 8c-2 9-4 13 0 13s5-5 6.500-13" stroke="#24c481" stroke-width="2.500"/></svg></span>
  <span class="t"><svg width="30" height="26" viewBox="0 0 30 26"><path d="M8 0h22v26H8z" fill="#ca64ea"/><path d="M23 0h7v9h-7z" fill="#ae4bd5"/><path d="M23 9h7v9h-7z" fill="#9332bf"/><path d="M23 18h7v8h-7z" fill="#7719aa"/><path d="M0 5h17v17H0z" fill="#7719aa"/><text x="8.500" y="18" font-size="13" font-weight="700" fill="#fff" text-anchor="middle">N</text></svg></span>
  <span class="t"><svg width="30" height="30" viewBox="0 0 30 30" fill="none"><path d="M28 17A13.500 13.500 0 1 0 16 28.500" stroke="#0a9cf5" stroke-width="2"/><path d="M20 11c-1-4-8-4-9 3-2 8 5 9 8 4" stroke="#0a9cf5" stroke-width="3.200"/><circle cx="22" cy="23" r="5" fill="#0a9cf5"/><path d="M24 20h-3v3h2l-2 3" stroke="#fff"/></svg></span>
  <span class="t run"><svg width="28" height="28" viewBox="0 0 28 28"><circle cx="14" cy="14" r="14" fill="#f9c62f"/><path d="M14 14 14 28A14 14 0 0 1 2 7z" fill="#2da94f"/><path d="M14 14 2 7a14 14 0 0 1 24.500 1H14z" fill="#e0453a"/><circle cx="14" cy="14" r="6.500" fill="#fff"/><circle cx="14" cy="14" r="5.200" fill="#4a8df6"/></svg></span>
  <span class="t run two"><svg width="28" height="24" viewBox="0 0 28 24"><path d="M0 1h11l3 3h13v6H0z" fill="#dfa000"/><path d="M0 5h13l2-2h13v20H0z" fill="#fdd15c"/><path d="M5 24V13h18v11h-5v-6h-8v6z" fill="#3793dd"/></svg></span>
  <span class="t run two"><svg width="30" height="30" viewBox="0 0 30 30"><path d="M22 0 30 4v22l-8 4z" fill="#23a4f2"/><path d="M22 0v8L4 23l-4-3zM22 30v-8L4 7l-4 3z" fill="#1683cf"/></svg></span>
  <span class="t run green"><svg width="24" height="30" viewBox="0 0 24 30"><path d="m9 4 4-3 8 4 1 9-8 14-12-1z" fill="#eee" stroke="#111"/><path d="m9 4 6-1L8 28l-5-1z" fill="#c4161c"/><path d="m15 6 5 8-5 12M17 5l-3 9" fill="none" stroke="#333" stroke-width="1.200"/></svg></span>
  <span class="t run"><svg width="30" height="30" viewBox="0 0 30 30"><rect width="30" height="30" rx="4" fill="#00b900"/><ellipse cx="15" cy="14" rx="11.500" ry="10" fill="#fff"/><path d="M9 21h11l-5 5z" fill="#fff"/><text x="15" y="17" font-size="7" font-weight="700" fill="#00b900" text-anchor="middle" textLength="16">LINE</text></svg></span>
  <span class="t run ppt"><svg width="30" height="28" viewBox="0 0 30 28"><circle cx="16" cy="14" r="13.500" fill="#ed6c47"/><path d="M16 .5A13.500 13.500 0 0 1 29.500 14H16z" fill="#ff8f6b"/><path d="M29.500 14a13.500 13.500 0 0 1-27 0z" fill="#d35230"/><path d="M0 6h16v16H0z" fill="#c43e1c"/><text x="8" y="18.500" font-size="12" font-weight="700" fill="#fff" text-anchor="middle">P</text></svg></span>
  <div class="tray">
    <svg width="17" height="10" viewBox="0 0 17 10"><path d="m1 9 7.500-8L16 9" fill="none" stroke="#fff" stroke-width="1.500"/></svg>
    <span class="zh">中</span><span class="bo">ㄅ</span>
    <div class="clock"><span>下午 09:02</span><span>2021/4/28</span></div>
    <svg class="act" width="32" height="32" viewBox="0 0 32 32"><path d="M1 2h20v15H9l-4 4v-4H1z" fill="#fff"/><path d="M5 6h12M5 9.500h12M5 13h8" stroke="#262b2d" stroke-width="1.300"/><circle cx="20.500" cy="20.500" r="10" fill="#3c4042" stroke="#888"/><text x="20.500" y="25.500" font-size="14" fill="#fff" text-anchor="middle">2</text></svg>
    <i class="desk"></i>
  </div>
</div>
</div>
</body>
</html>
```
FILE: styles.css
```css
* { box-sizing: border-box; }
body { margin: 0; width: 1920px; height: 1080px; overflow: hidden; font-family: "Open Sans", "Noto Sans CJK TC", sans-serif; font-size: 14.7px; font-weight: 350; color: #444; }
svg { display: block; flex: none; }
.defs { position: absolute; }
.app { display: flex; flex-direction: column; height: 1080px; background: #e6e6e6; }
span { white-space: nowrap; }
i, s { font-style: normal; text-decoration: none; }

/* title bar */
.titlebar { height: 43px; padding-bottom: 3px; flex: none; background: #b7472a; color: #fff; display: flex; align-items: center; }
.titlebar > svg { fill: none; stroke: #fff; stroke-width: 1.5; margin-top: 3px; }
.titlebar > span { line-height: 24px; }
.autosave { margin-left: 27px; width: 67px; position: relative; top: -1px; }
.toggle { width: 47px; height: 20px; border: 1.5px solid #fff; border-radius: 10px; font-size: 11.5px; display: flex; align-items: center; padding-left: 4px; gap: 2px; }
.toggle i { width: 10px; height: 10px; border-radius: 50%; background: #fff; }
.i-save { margin-left: 16px; }
.i-undo { margin-left: 15px; }
.i-c { margin-left: 7px; stroke: none !important; }
.i-redo { margin-left: 13px; }
.i-show { margin-left: 15px; }
.i-more { margin-left: 20px; }
.doc { margin-left: 107px; width: 186px; font-size: 15px; letter-spacing: -.1px; position: relative; top: -1px; }
.titlebar .i-tri { margin-left: 21px; margin-top: 1px; }
.search { margin-left: 97px; margin-top: 3px; width: 458px; height: 29px; background: #fcc8b4; color: #7a1212; display: flex; align-items: center; padding-left: 23px; gap: 19px; }
.search span { line-height: 22px; margin-bottom: 3px; }
.search svg { fill: none; stroke: #7a1212; stroke-width: 1.3; }
.user { margin-left: 388px; width: 58px; }
.avatar { width: 30px; height: 30px; margin-top: 3px; border-radius: 50%; background: #d2d0ce; display: flex; align-items: center; justify-content: center; }
.avatar svg { fill: none; stroke: #666; stroke-width: 1.3; }
.w1 { margin-left: 33px; }
.w2 { margin-left: 42px; }
.w3 { margin-left: 43px; }
.w4 { margin-left: 45px; }

/* tabs */
.tabs { height: 43px; flex: none; background: #f3f2f1; display: flex; padding-left: 17px; gap: 27.6px; font-size: 16.8px; line-height: 34px; }
.tabs > span { height: 36px; border-bottom: 4px solid transparent; }
.tabs .file { margin-right: 4px; }
.tabs .on { font-weight: 700; border-color: #b7472a; }
.tabs .ctx { color: #b7472a; }
.acro { width: 66px; font-size: 17.2px; }
.share { margin-left: auto; padding: 4px 14px 0 0; display: flex; gap: 11px; }
.share button { width: 76px; height: 30px; border: 1px solid #e1dfdd; border-radius: 3px; background: #fff; color: #b7472a; font: 700 16.3px/24px "Noto Sans CJK TC", sans-serif; display: flex; align-items: center; justify-content: center; gap: 7px; padding: 0 0 2px; }
.share svg { fill: none; stroke: #b7472a; stroke-width: 1.2; }

/* ribbon */
.ribbon { height: 116px; flex: none; background: #f3f2f1; display: flex; }
.group { height: 111px; border-right: 1px solid #b3b0ad; display: flex; flex-direction: column; flex: none; }
.body { height: 90px; display: flex; flex: none; }
.label { height: 21px; line-height: 29px; display: flex; justify-content: center; position: relative; font-size: 14.7px; }
.ln { width: 11px; height: 11px; position: absolute; right: 3px; top: 11px; }
.ls { letter-spacing: -.2px; white-space: nowrap; }
.cv { width: 8px; height: 6px; color: #444; }
.cv.dim { color: #aaa; }
.cv.up { transform: scaleY(-1); }
.g1 { width: 120px; } .g2 { width: 260px; } .g3 { width: 369px; } .g4 { width: 272px; } .g5 { width: 405px; } .g6 { width: 107px; } .g7 { width: 112px; } .g8 { width: 72px; } .g9 { width: 71px; }
.g1 .label { padding-right: 22px; } .g2 .label { padding-right: 8px; } .g5 .label { padding-right: 22px; }
.big { width: 100%; display: flex; flex-direction: column; align-items: center; flex: none; }
.big .ico { height: 44px; display: flex; align-items: center; justify-content: center; }
.big b { font-weight: 350; height: 19px; line-height: 19px; display: flex; align-items: center; gap: 5px; white-space: nowrap; }
.rows { display: flex; flex-direction: column; flex: none; }
.rows > div { height: 29.5px; display: flex; align-items: center; }
.rows span { margin: 0 8px 2px 5px; line-height: 20px; }
.w-paste { width: 66px; padding-left: 6px; }
.r1 .cv { margin-left: 8px; }
.w-new { width: 80px; padding-left: 2px; }
.w-reuse { margin-left: -3px; width: 56px; padding-left: 5px; margin-right: 3px; }
.r2 { margin-left: 7px; }
.colb { flex-direction: column; padding-left: 10px; }
.frow { display: flex; align-items: center; height: 49px; }
.frow.f2 { height: 30px; }
.g3 .frow.f2 { margin-left: -1px; }
.sel { height: 29px; background: #fff; border: 1px solid #c8c6c4; display: flex; align-items: center; justify-content: space-between; padding: 0 4px 0 2px; color: #222; overflow: hidden; }
.s1 { width: 189px; font-size: 15px; letter-spacing: -.1px; }
.s2 { width: 61px; margin-left: 2px; font-size: 15.5px; }
.fa { position: relative; margin-left: 7px; width: 20px; font-size: 21px; line-height: 24px; }
.fa svg { position: absolute; right: 0; top: 1px; }
.fa.sm { margin-left: 12px; width: 18px; font-size: 18px; }
.fa.er { margin-left: 8px; width: 21px; }
.fa.er svg { top: 10px; }
.vs { width: 1px; height: 27px; background: #d0cecc; margin-left: 8px; }
.c30 { width: 30px; text-align: center; font-size: 17px; line-height: 24px; flex: none; }
.c30 em { font-family: "Liberation Serif", serif; font-size: 19px; }
.und { text-decoration: underline; text-underline-offset: 3px; }
.shd { text-shadow: 2px 1px 1px #aaa; font-weight: 600; }
.strike { text-decoration: line-through; font-size: 15px; }
.av { position: relative; font-size: 15px; line-height: 18px; height: 26px; letter-spacing: -.5px; }
.av svg { position: absolute; left: 4px; bottom: 0; }
.aa { font-size: 16px; }
.f2 .c30.aa { margin-left: 9px; }
.f2 > .cv { margin-left: 1px; }
.f2 .vs { margin-left: 11px; }
.hl { margin-left: 9px; margin-top: 3px; }
.f2 .hl + .cv { margin-left: 8px; }
.fc { margin-left: 14px; width: 20px; height: 21px; line-height: 15px; font-size: 18px; text-align: center; border-bottom: 5px solid #f00; }
.f2 .fc + .cv { margin-left: 8px; }
.para { width: 211px; padding-left: 10px; flex: none; }
.press { background: #d2d0ce; border: 1px solid #8a8886; height: 29px; display: flex; align-items: center; justify-content: center; }
.p1 { width: 47px; gap: 8px; }
.p2 { width: 28px; }
.num { margin-left: 6px; }
.num + .cv { margin-left: 8px; }
.ded { margin-left: 14px; }
.ind { margin-left: 11px; }
.lsp { margin-left: 11px; }
.lsp + .cv { margin-left: 5px; }
.al { stroke: #555; stroke-width: 1.5; fill: none; }
.a2 { margin-left: 7px; } .a3 { margin-left: 11px; }
.cols { margin-left: 10px; }
.f2 .cols + .cv { margin-left: 7px; }
.r4 { margin-left: 10px; }
.r4 .cv { margin-left: 5px; }
.gallery { margin: 2px 0 0 11px; width: 166px; height: 78px; border: 1px solid #c8c6c4; background: #fff; display: flex; flex: none; }
.gallery > svg { width: 146px; height: 76px; }
.gbtn { width: 18px; border-left: 1px solid #c8c6c4; background: #f3f2f1; display: flex; flex-direction: column; }
.gbtn i { flex: 1; border-bottom: 1px solid #c8c6c4; display: flex; align-items: center; justify-content: center; }
.gbtn i:last-child { border: 0; }
.w-arr { width: 54px; margin-left: 2px; }
.w-qs { width: 50px; }
.r5 { margin-left: 5px; }
.rows.r5 > div, .rows.r6 > div { height: 29px; }
.rows.r5, .rows.r6 { margin-top: -1.5px; }
.r5 span { margin-right: 6px; }
.rows.r6 { margin-left: 14px; }
.r6 .far { margin-left: 7px; }
.collapse { margin: 104px 0 0 109px; }

/* work area */
.work { height: 802px; flex: none; display: flex; background: linear-gradient(#d0cfce, #e6e6e6 8px); border-bottom: 1px solid #c0c0c0; }
.thumbs { width: 186px; margin-top: 3px; height: 796px; border-right: 1px solid #b8b8b8; padding-top: 22px; flex: none; }
.trow { height: 90px; display: flex; }
.trow > span { width: 44px; padding-left: 15px; font-size: 20px; line-height: 12px; font-weight: 300; }
.trow svg text { font-family: "Liberation Sans", "Noto Sans CJK TC", sans-serif; }
.th { outline: 1px solid #bbb; outline-offset: -1px; }
.cur > span { width: 41px; color: #c43e1c; }
.th5 { margin-top: -3px; }
.editor { width: 1379px; flex: none; display: flex; flex-direction: column; border-right: 1px solid #bababa; }
.stage { height: 736px; display: flex; flex: none; padding-top: 1px; }
.slide { fill: #000; }
.slide text { white-space: pre; }
.kai { font: 15.3px/1 "Liberation Serif", "Noto Sans CJK TC", serif; font-weight: 350; }
.req { font: 600 53px/1 "Open Sans", sans-serif; }
.ln1 { fill: none; stroke: #444; stroke-width: .9; }
.dash { stroke-dasharray: 5 3; }
.dot { stroke-dasharray: 1.5 1.2; }
.fan { stroke: #222; stroke-width: .7; }
.ser { font: 500 10px/1 "Liberation Serif", "Noto Sans CJK TC", serif; fill: #000; }
.s18 { font-size: 18px; } .s14 { font-size: 13.8px; } .s12 { font-size: 12.5px; font-weight: 500; } .s9 { font-size: 9px; } .s7 { font-size: 7.7px; }
.b8 { font-size: 8px; font-weight: 700; } .b9 { font-size: 9px; font-weight: 700; }
.en { font: 11.7px/1 "Liberation Serif", serif; }
.b { display: flex; align-items: center; justify-content: center; width: 18px; height: 18px; background: #fff; border: 1px solid #c0c0c0; flex: none; }
.b s { border: 5px solid transparent; border-bottom: 0; border-top: 5px solid #666; }
.b .up { transform: rotate(180deg); } .b .lf { transform: rotate(90deg); } .b .rt { transform: rotate(-90deg); }
.vscroll { width: 19px; padding-top: 2px; display: flex; flex-direction: column; flex: none; }
.track { height: 655px; background: #dadada; padding-top: 450px; }
.thumb { display: block; height: 90px; width: 18px; background: #fff; border: 1px solid #ababab; }
.vscroll svg { margin: 4px 0 0 2px; }
.hscroll { height: 24px; padding: 1px 0 4px 4px; display: flex; border-bottom: 1px solid #bcbcbc; }
.hscroll .b { height: 19px; }
.gap { width: 23px; background: #dadada; }
.bar { width: 1291px; background: #fff; border: 1px solid #ababab; }
.hscroll .r { margin-left: 1px; }
.notes { flex: 1; display: flex; justify-content: space-between; padding: 5px 1px 0 14px; font-size: 18.2px; color: #555; }
.notes span { line-height: 30px; }
.notes .b { width: 19px; height: 17px; }

/* format pane */
.pane { width: 355px; padding-left: 14px; flex: none; }
.ptitle { display: flex; align-items: center; height: 40px; margin-top: 8px; font-size: 26.7px; color: #b7472a; font-weight: 300; }
.ptitle span { width: 256px; }
.ptitle svg + svg { margin-left: 40px; }
.ptabs { height: 26px; margin: 10px 0 0 6px; display: flex; gap: 23px; line-height: 26px; font-size: 15px; color: #333; }
.picons { display: flex; margin: 11px 0 0 1px; gap: 10px; }
.picons span { width: 38px; height: 39px; display: flex; align-items: center; justify-content: center; }
.sel2 { background: #c6c6c6; }
.notch { margin-top: 7px; }
.pane ul { list-style: none; margin: 3px 0 0 12px; padding: 0; font-size: 15px; }
.pane li { height: 31px; line-height: 29px; display: flex; align-items: center; }
.pane li::before { content: "▷"; width: 17px; font: 9px/29px "DejaVu Sans", sans-serif; color: #555; }
.check { position: absolute; left: 1854px; top: 956px; width: 45px; height: 45px; background: #1f2126; box-shadow: 2px 2px 3px #777; display: flex; align-items: center; justify-content: center; }

/* status bar */
.status { height: 26px; flex: none; background: #f3f2f1; display: flex; align-items: center; font-size: 14.5px; line-height: 24px; padding-left: 10px; }
.st1 { width: 105px; }
.st2 { margin-left: 21px; }
.right { margin-left: auto; display: flex; align-items: center; }
.st3 { width: 68px; margin-left: 3px; }
.vb { width: 50px; height: 26px; display: flex; align-items: center; justify-content: center; }
.vb.on { background: #d2d0ce; }
.vb svg { fill: none; stroke: #555; stroke-width: 1.5; }
.zoomer { margin-left: 7px; }
.pct { width: 54px; margin-left: 17px; }
.right > svg:last-child { margin-right: 6px; }

/* taskbar */
.taskbar { height: 50px; flex: none; background: #262b2d; color: #fff; display: flex; }
.taskbar span { display: flex; align-items: center; justify-content: center; }
.start { width: 60px; }
.tsearch { width: 430px; background: #333; border: 1px solid #666; display: flex; align-items: center; padding-left: 14px; gap: 15px; font-size: 20.8px; color: #ddd; font-weight: 300; }
.tsearch span { margin-bottom: 2px; }
.tv { width: 60px; margin-right: 3px; }
.t { width: 62px; position: relative; }
.t.run::after { content: ""; position: absolute; bottom: 0; left: 5.5px; width: 51px; height: 3px; background: #76b9ed; }
.t.two::after { background: linear-gradient(90deg, #76b9ed 40px, #4f86b3 40px); }
.t.green { width: 51px; margin: 0 5.5px; background: #3f7440; }
.taskbar .green::after { left: 0; background: #4be33d; }
.t.ppt { background: #525759; }
.taskbar .ppt::after { left: 0; width: 62px; }
.tray { margin-left: auto; display: flex; align-items: center; }
.zh { width: 17px; margin-left: 12px; font-size: 17px; }
.bo { width: 20px; height: 20px; margin-left: 17px; background: #fff; color: #000; font-size: 16px; }
.clock { width: 82px; margin-left: 18px; font-size: 14.7px; line-height: 23px; letter-spacing: -.2px; }
.act { margin: 2px 0 0 20px; }
.desk { width: 1px; height: 50px; background: #777; margin: 0 6px 0 13px; }
```
